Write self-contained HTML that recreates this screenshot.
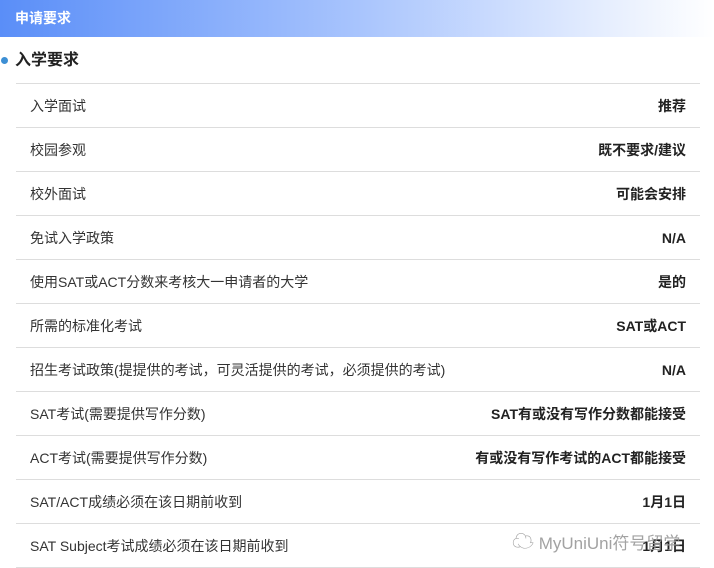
<!DOCTYPE html><html><head><meta charset="utf-8"><style>
body{margin:0;width:714px;height:568px;overflow:hidden;background:#fff;font-family:"Liberation Sans","Noto Sans CJK SC",sans-serif;}
.hd{height:37px;background:linear-gradient(90deg,#5a8ef8 0%,#a8c4fd 50%,#e6eefe 85%,#fff 100%);color:#fff;font-weight:bold;font-size:14px;line-height:37px;padding-left:15px}
.t{position:absolute;top:49px;left:15px;font-size:16px;font-weight:bold;color:#222;line-height:24px}
.dot{position:absolute;left:1px;top:57px;width:7px;height:7px;border-radius:50%;background:#3d8fd4}
.rows{position:absolute;top:83px;left:16px;width:684px;border-top:1px solid #ddd}
.r{height:43px;border-bottom:1px solid #ddd;display:flex;justify-content:space-between;align-items:center;font-size:14px;color:#333;padding:0 14px}
.r b{color:#222}
.wm{position:absolute;left:512px;top:524px;font-size:17px;color:#999;opacity:.9}
</style></head><body>
<div class="hd">申请要求</div>
<div class="dot"></div><div class="t">入学要求</div>
<div class="rows">
<div class="r"><span>入学面试</span><b>推荐</b></div>
<div class="r"><span>校园参观</span><b>既不要求/建议</b></div>
<div class="r"><span>校外面试</span><b>可能会安排</b></div>
<div class="r"><span>免试入学政策</span><b>N/A</b></div>
<div class="r"><span>使用SAT或ACT分数来考核大一申请者的大学</span><b>是的</b></div>
<div class="r"><span>所需的标准化考试</span><b>SAT或ACT</b></div>
<div class="r"><span>招生考试政策(提提供的考试，可灵活提供的考试，必须提供的考试)</span><b>N/A</b></div>
<div class="r"><span>SAT考试(需要提供写作分数)</span><b>SAT有或没有写作分数都能接受</b></div>
<div class="r"><span>ACT考试(需要提供写作分数)</span><b>有或没有写作考试的ACT都能接受</b></div>
<div class="r"><span>SAT/ACT成绩必须在该日期前收到</span><b>1月1日</b></div>
<div class="r"><span>SAT Subject考试成绩必须在该日期前收到</span><b>1月1日</b></div>
</div>
<div class="wm"><span style="font-size:22px">☁</span> MyUniUni符号留学</div>
</body></html>
